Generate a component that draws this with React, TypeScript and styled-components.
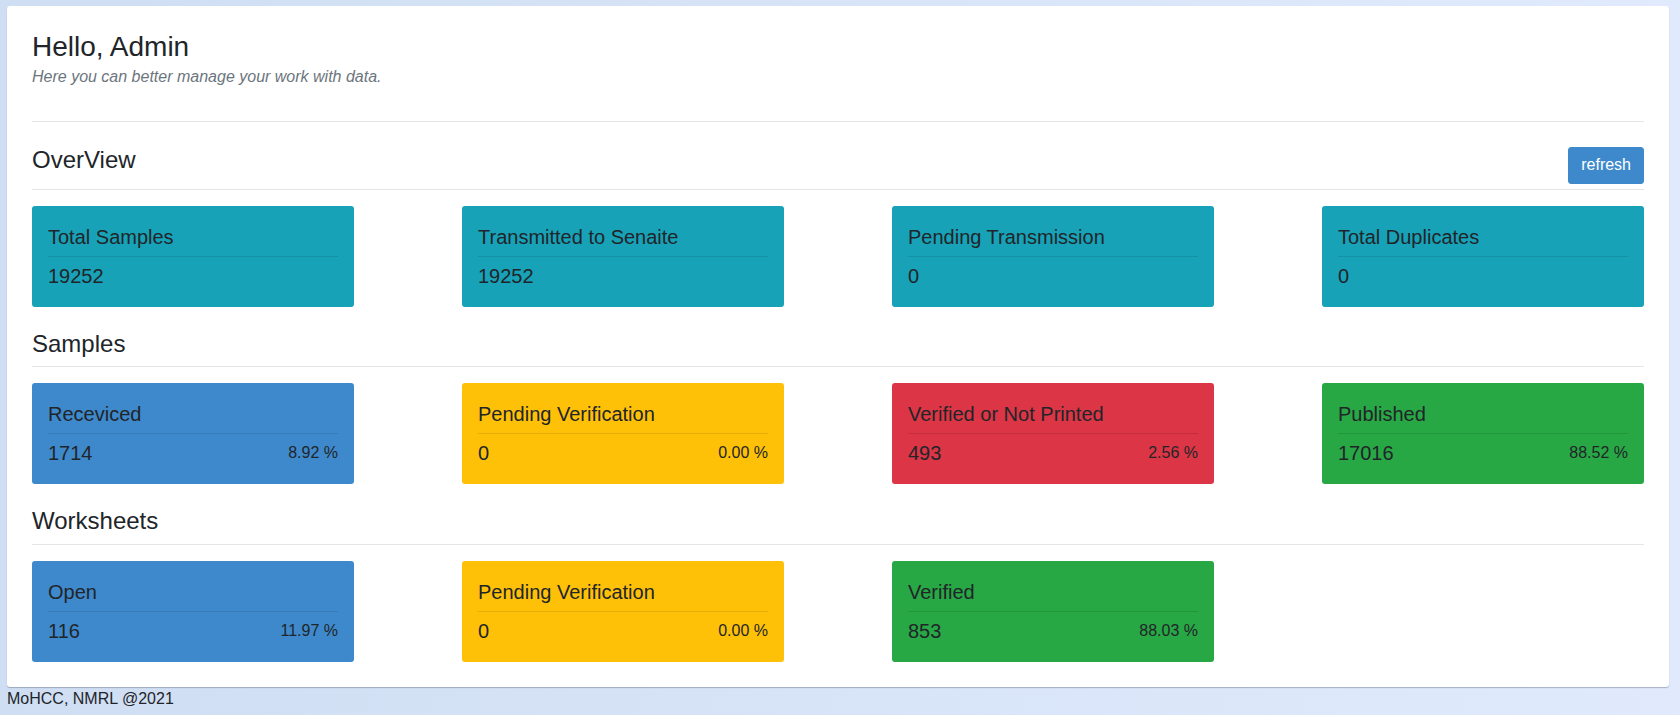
import React from "react";
import styled, { createGlobalStyle } from "styled-components";

const GlobalStyle = createGlobalStyle`
  html, body {
    margin: 0;
    padding: 0;
  }
  body {
    min-height: 100vh;
    background: linear-gradient(to right, #cfdef3, #e0eafc);
    font-family: "Liberation Sans", Arial, Helvetica, sans-serif;
    color: #212529;
    font-size: 16px;
    line-height: 24px;
  }
`;

const Page = styled.div`
  padding: 6px 11px 0 7px;
`;

const Panel = styled.main`
  background: #ffffff;
  border-radius: 3px;
  padding: 24px 25px 25px;
  box-shadow: 0 1px 1px rgba(60, 70, 100, 0.35);
`;

const Greeting = styled.h3`
  margin: 0;
  font-size: 28px;
  line-height: 33.6px;
  font-weight: 400;
  color: #212529;
`;

const Subtitle = styled.p`
  margin: 1px 0 0;
  font-size: 16px;
  line-height: 24px;
  font-style: italic;
  color: #6c757d;
`;

const Rule = styled.hr`
  margin: 32px 0 24px;
  border: 0;
  border-top: 1px solid rgba(0, 0, 0, 0.1);
`;

const Section = styled.section`
  & + & {
    margin-top: 23px;
  }
`;

const SectionHeader = styled.div`
  display: flex;
  justify-content: space-between;
  align-items: flex-start;
  border-bottom: 1px solid rgba(0, 0, 0, 0.1);
`;

const SectionTitle = styled.h4`
  margin: 0 0 8px;
  font-size: 24px;
  line-height: 28.8px;
  font-weight: 400;
  color: #212529;
`;

const RefreshButton = styled.button`
  margin: 1px 0 5px;
  height: 37px;
  padding: 0 12px;
  border: 1px solid #3e89cc;
  border-radius: 3px;
  background: #3e89cc;
  color: #ffffff;
  font-family: "Liberation Sans", Arial, Helvetica, sans-serif;
  font-size: 16px;
  line-height: 24px;
  cursor: pointer;
`;

const CardGrid = styled.div`
  display: grid;
  grid-template-columns: repeat(4, 322px);
  justify-content: space-between;
  margin-top: 16px;
`;

const tones: Record<string, string> = {
  info: "#17a2b8",
  primary: "#3e89cc",
  warning: "#ffc107",
  danger: "#dc3545",
  success: "#28a745",
};

const Card = styled.div<{ $tone: string }>`
  background: ${(p) => tones[p.$tone]};
  border-radius: 3px;
  padding: 19px 16px 16px;
  height: 101px;
  box-sizing: border-box;
  color: #212529;
`;

const CardTitle = styled.div`
  font-size: 20px;
  line-height: 24px;
  padding-bottom: 7px;
  border-bottom: 1px solid rgba(0, 0, 0, 0.1);
`;

const CardValueRow = styled.div`
  display: flex;
  justify-content: space-between;
  align-items: center;
  margin-top: 4px;
`;

const CardValue = styled.span`
  font-size: 20px;
  line-height: 30px;
`;

const CardPercent = styled.span`
  font-size: 16px;
  line-height: 24px;
  margin-bottom: 1px;
`;

const Footer = styled.footer`
  font-size: 16px;
  line-height: 24px;
  color: #212529;
`;

type Stat = { title: string; value: string; percent?: string; tone: string };

const overview: Stat[] = [
  { title: "Total Samples", value: "19252", tone: "info" },
  { title: "Transmitted to Senaite", value: "19252", tone: "info" },
  { title: "Pending Transmission", value: "0", tone: "info" },
  { title: "Total Duplicates", value: "0", tone: "info" },
];

const samples: Stat[] = [
  { title: "Receviced", value: "1714", percent: "8.92 %", tone: "primary" },
  { title: "Pending Verification", value: "0", percent: "0.00 %", tone: "warning" },
  { title: "Verified or Not Printed", value: "493", percent: "2.56 %", tone: "danger" },
  { title: "Published", value: "17016", percent: "88.52 %", tone: "success" },
];

const worksheets: Stat[] = [
  { title: "Open", value: "116", percent: "11.97 %", tone: "primary" },
  { title: "Pending Verification", value: "0", percent: "0.00 %", tone: "warning" },
  { title: "Verified", value: "853", percent: "88.03 %", tone: "success" },
];

const StatCard = ({ stat }: { stat: Stat }) => (
  <Card $tone={stat.tone}>
    <CardTitle>{stat.title}</CardTitle>
    <CardValueRow>
      <CardValue>{stat.value}</CardValue>
      {stat.percent && <CardPercent>{stat.percent}</CardPercent>}
    </CardValueRow>
  </Card>
);

export default function App() {
  return (
    <>
      <GlobalStyle />
      <Page>
        <Panel>
          <Greeting>Hello, Admin</Greeting>
          <Subtitle>Here you can better manage your work with data.</Subtitle>
          <Rule />
          <Section>
            <SectionHeader>
              <SectionTitle>OverView</SectionTitle>
              <RefreshButton type="button">refresh</RefreshButton>
            </SectionHeader>
            <CardGrid>
              {overview.map((s) => (
                <StatCard key={s.title} stat={s} />
              ))}
            </CardGrid>
          </Section>
          <Section>
            <SectionHeader>
              <SectionTitle>Samples</SectionTitle>
            </SectionHeader>
            <CardGrid>
              {samples.map((s) => (
                <StatCard key={s.title} stat={s} />
              ))}
            </CardGrid>
          </Section>
          <Section>
            <SectionHeader>
              <SectionTitle>Worksheets</SectionTitle>
            </SectionHeader>
            <CardGrid>
              {worksheets.map((s) => (
                <StatCard key={s.title} stat={s} />
              ))}
            </CardGrid>
          </Section>
        </Panel>
        <Footer>MoHCC, NMRL @2021</Footer>
      </Page>
    </>
  );
}
